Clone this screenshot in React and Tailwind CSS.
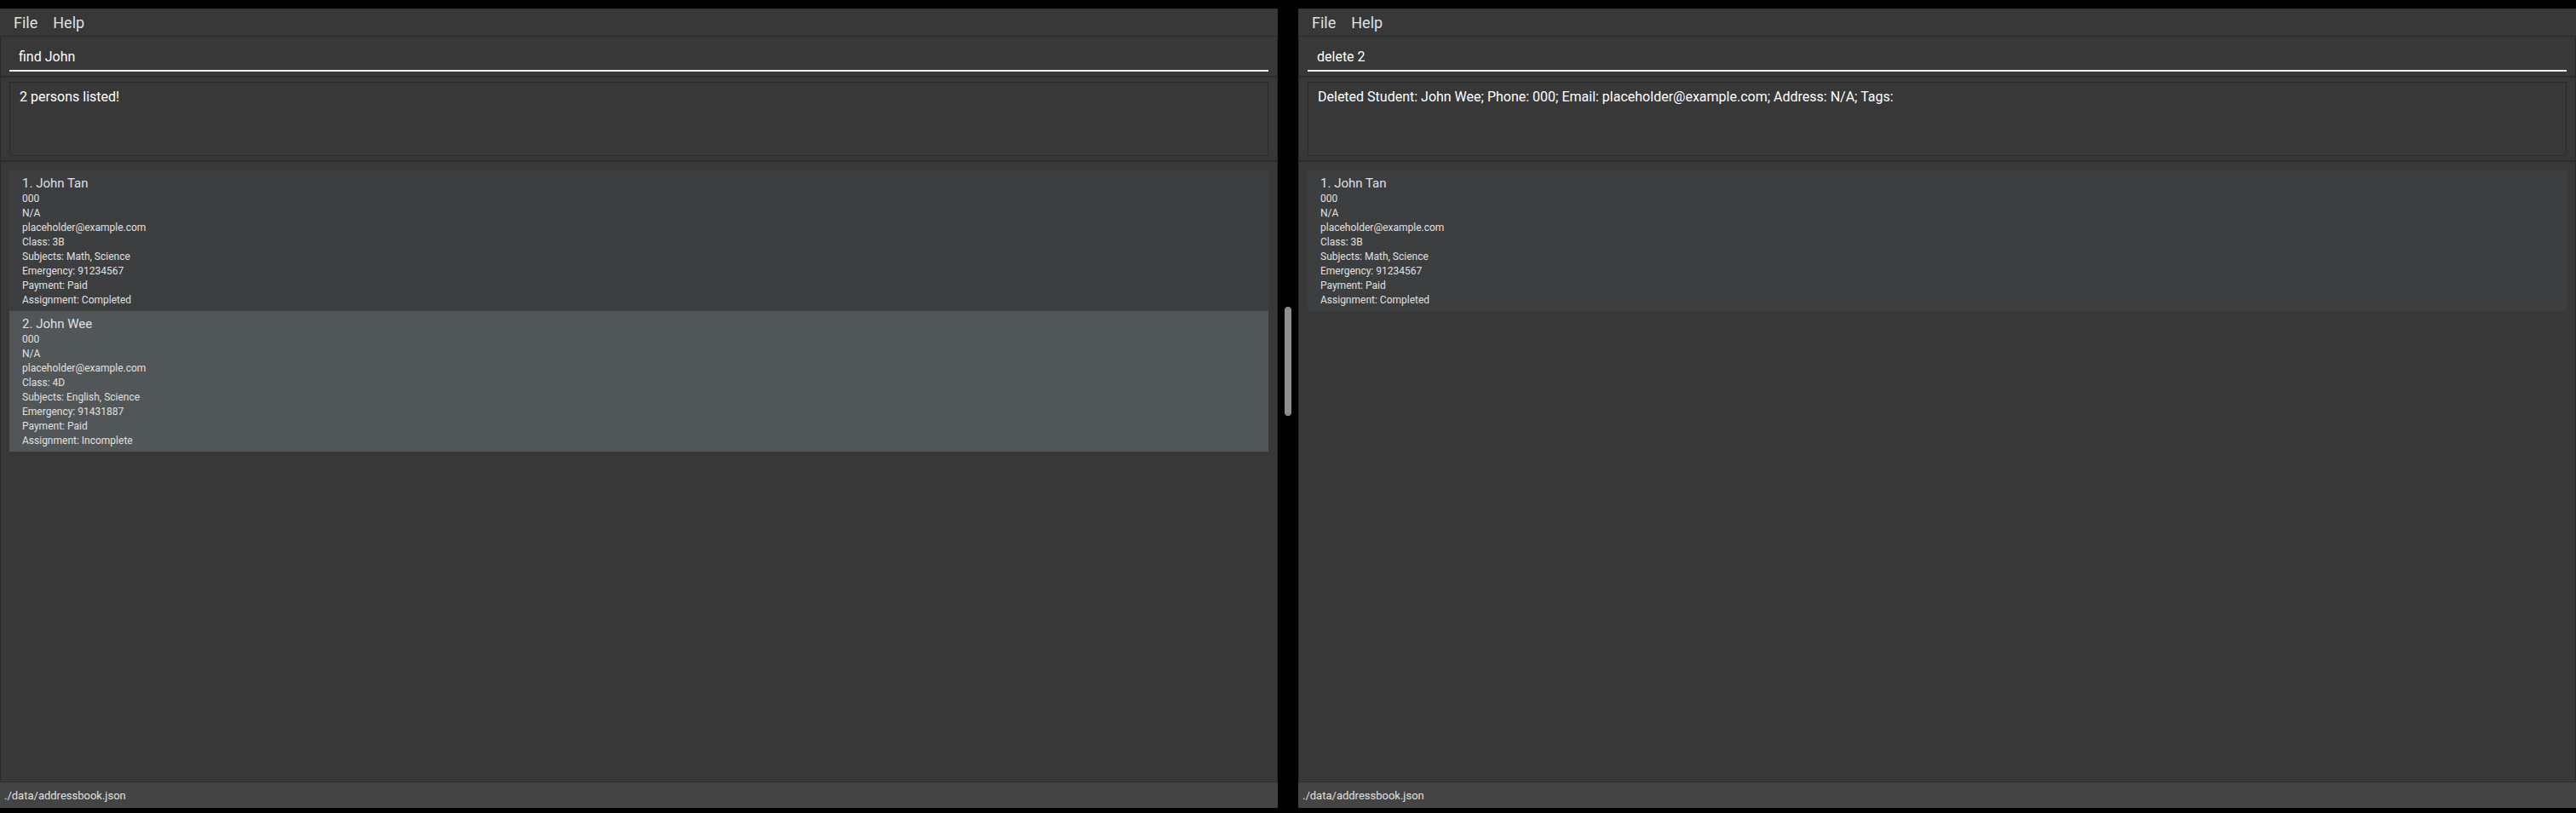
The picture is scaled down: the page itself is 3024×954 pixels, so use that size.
const johnTan = {
  name: "John Tan",
  details: [
    "000",
    "N/A",
    "placeholder@example.com",
    "Class: 3B",
    "Subjects: Math, Science",
    "Emergency: 91234567",
    "Payment: Paid",
    "Assignment: Completed",
  ],
};

const johnWee = {
  name: "John Wee",
  details: [
    "000",
    "N/A",
    "placeholder@example.com",
    "Class: 4D",
    "Subjects: English, Science",
    "Emergency: 91431887",
    "Payment: Paid",
    "Assignment: Incomplete",
  ],
};

const windows = [
  {
    id: "find",
    command: "find John",
    result: "2 persons listed!",
    persons: [johnTan, johnWee],
  },
  {
    id: "delete",
    command: "delete 2",
    result:
      "Deleted Student: John Wee; Phone: 000; Email: placeholder@example.com; Address: N/A; Tags:",
    persons: [johnTan],
  },
];

function MenuBar() {
  return (
    <nav className="flex h-8 items-center gap-[18px] border-t border-[#303030] px-4 text-[18px] leading-6 text-[#e0e0e0]">
      <button type="button">File</button>
      <button type="button">Help</button>
    </nav>
  );
}

function PersonCard({ index, person }) {
  return (
    <li className="bg-[#3c3e3f] px-[15px] pt-[5px] pb-1 text-[#e0e0e0] even:bg-[#515658]">
      <h2 className="text-[15px] leading-5">
        {index}. {person.name}
      </h2>
      {person.details.map((line) => (
        <p key={line} className="text-[12px] leading-[17px]">
          {line}
        </p>
      ))}
    </li>
  );
}

function AddressBookWindow({ id, command, result, persons }) {
  return (
    <section className="flex min-w-0 flex-1 flex-col bg-[#383838]">
      <MenuBar />
      <div className="flex flex-1 flex-col border border-[#2b2b2b]">
        <div className="border-b-2 border-[#2d2d2d] px-[10px] pt-2 pb-[5px]">
          <input
            type="text"
            aria-label="Command"
            name={`${id}-command`}
            defaultValue={command}
            className="block h-[33px] w-full border-b-2 border-[#f0f0f0] bg-transparent px-[11px] text-[16px] text-white outline-none"
          />
        </div>
        <div className="border-b-2 border-[#2d2d2d] px-[10px] py-[5px]">
          <textarea
            readOnly
            aria-label="Result"
            name={`${id}-result`}
            value={result}
            className="block h-[87px] w-full resize-none overflow-hidden border border-[#2b2b2b] bg-transparent px-[11px] py-[7px] text-[16px] leading-5 text-white outline-none"
          />
        </div>
        <ol className="flex-1 px-[10px] pt-[10px]">
          {persons.map((person, i) => (
            <PersonCard key={person.name} index={i + 1} person={person} />
          ))}
        </ol>
      </div>
      <footer className="h-[30px] bg-[#444444] px-[5px] pt-[6px] text-[13px] leading-5 text-[#e0e0e0]">
        ./data/addressbook.json
      </footer>
    </section>
  );
}

export default function App() {
  return (
    <main className="flex min-h-screen bg-black pt-[10px] pb-[6px] font-['Roboto',sans-serif]">
      <AddressBookWindow {...windows[0]} />
      <div className="w-6 px-2 pt-[350px]">
        <div className="h-32 rounded-full bg-[#8e8e8e]" />
      </div>
      <AddressBookWindow {...windows[1]} />
    </main>
  );
}
